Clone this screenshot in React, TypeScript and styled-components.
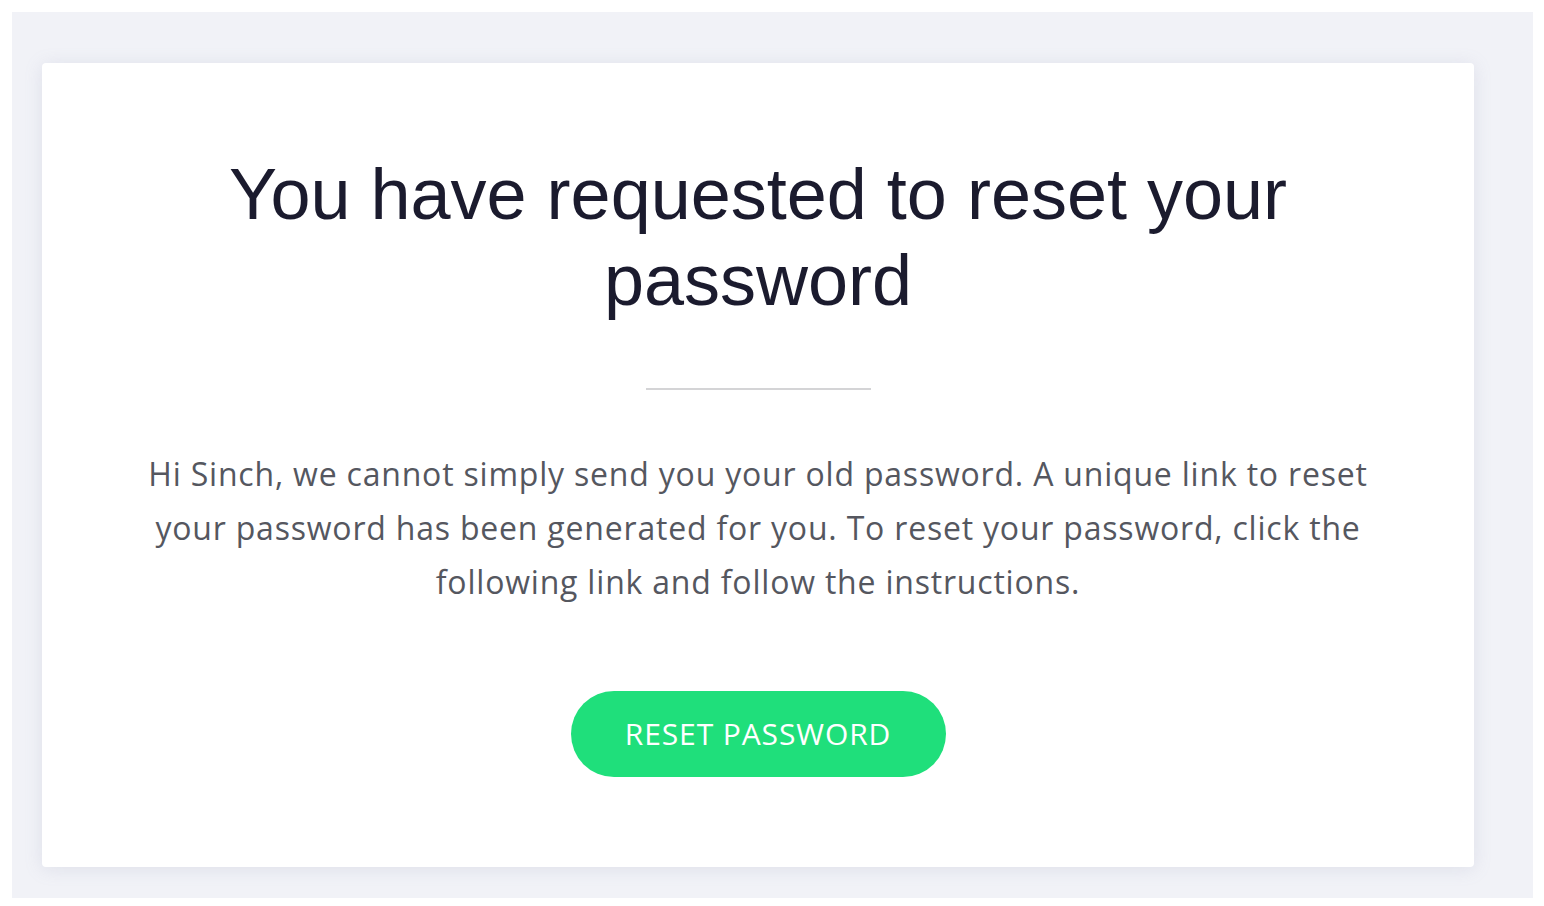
import React from "react";
import styled, { createGlobalStyle } from "styled-components";

const GlobalStyle = createGlobalStyle`
  html, body {
    margin: 0;
    background: #ffffff;
  }
  body {
    margin: 12px 11px 12px 12px;
  }
  * {
    box-sizing: border-box;
  }
`;

// 바깥 회색 영역
const Page = styled.div`
  background: #f1f2f7;
  padding: 51px 59px 31px 30px;
`;

const Card = styled.div`
  background: #ffffff;
  border-radius: 4px;
  box-shadow: 0 2px 18px rgba(140, 145, 175, 0.18);
  padding: 88px 40px 90px;
  display: flex;
  flex-direction: column;
  align-items: center;
  text-align: center;
`;

const Title = styled.h1`
  margin: 0;
  max-width: 1100px;
  font-family: "Liberation Sans", Arial, sans-serif;
  font-size: 72px;
  font-weight: 400;
  line-height: 1.2;
  color: #1b1b2e;
`;

const Divider = styled.hr`
  width: 225px;
  height: 2px;
  margin: 64px 0 57px;
  border: none;
  background: #d4d4d6;
`;

const Message = styled.p`
  margin: 0;
  max-width: 1250px;
  font-family: "Open Sans", "Noto Sans", sans-serif;
  font-size: 32px;
  letter-spacing: 0.8px;
  line-height: 54px;
  color: #55575f;
`;

const ResetButton = styled.a`
  margin-top: 82px;
  width: 375px;
  height: 86px;
  border-radius: 43px;
  background: #1fdf7b;
  display: flex;
  align-items: center;
  justify-content: center;
  font-family: "Open Sans", "Noto Sans", sans-serif;
  font-size: 30px;
  letter-spacing: 0.9px;
  color: #ffffff;
  text-decoration: none;
`;

export default function App() {
  return (
    <>
      <GlobalStyle />
      <Page>
        <Card>
          <Title>You have requested to reset your password</Title>
          <Divider />
          <Message>
            Hi Sinch, we cannot simply send you your old password. A unique link
            to reset your password has been generated for you. To reset your
            password, click the following link and follow the instructions.
          </Message>
          <ResetButton href="#">RESET PASSWORD</ResetButton>
        </Card>
      </Page>
    </>
  );
}
